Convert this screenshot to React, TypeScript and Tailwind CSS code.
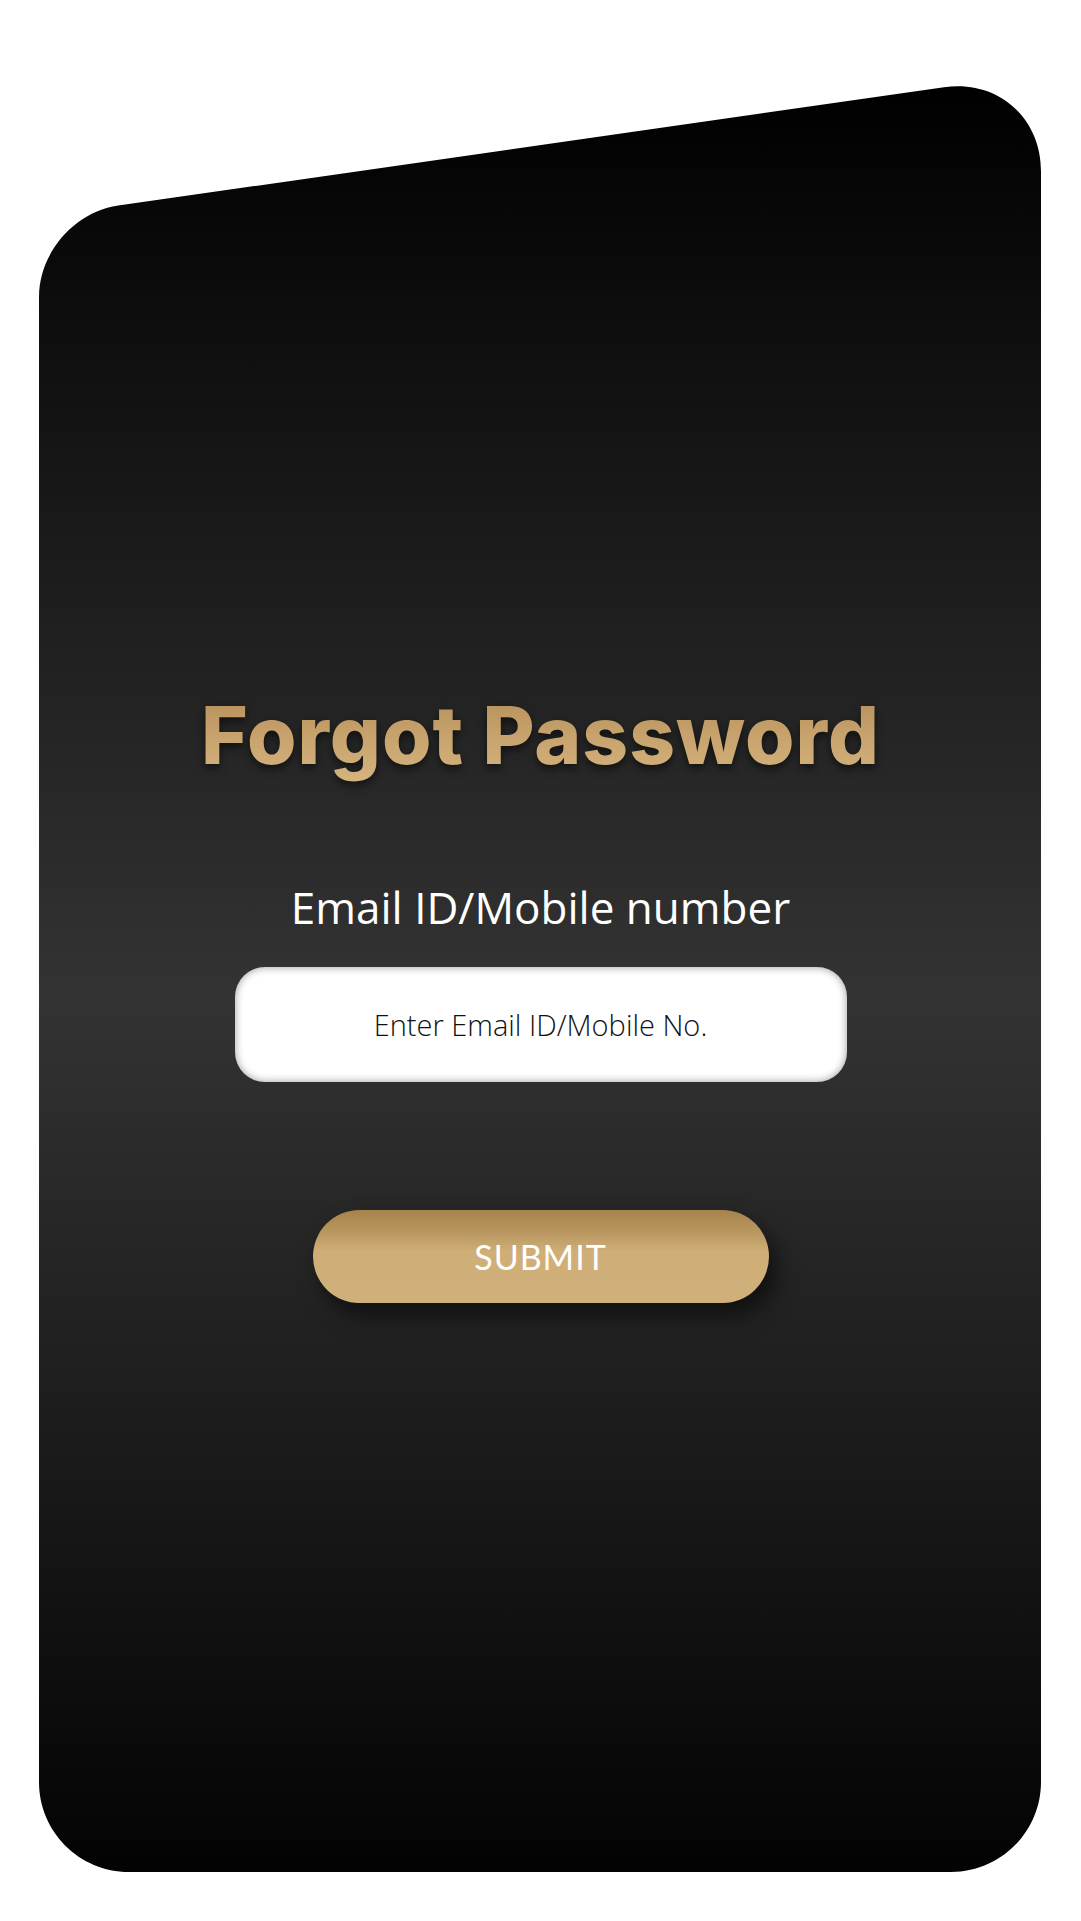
import React, { useState } from 'react';

// card outline: slanted top edge, rounded corners (card box is 1002 x 1788)
const cardShape =
  "[clip-path:path('M0,213C0,168.8,35.5,127.9,79.2,121.6L905,3.2C958.6,-4.5,1002,33.2,1002,87.3L1002,1698C1002,1747.7,961.7,1788,912,1788L90,1788C40.3,1788,0,1747.7,0,1698Z')]";

export default function App() {
  const [value, setValue] = useState('');

  const handleSubmit = (e: React.FormEvent) => {
    e.preventDefault();
  };

  return (
    <div className="min-h-[1921px] w-full bg-white pt-[84px] font-['Open_Sans','Lato',sans-serif]">
      <div
        className={`mx-[39px] h-[1788px] bg-[linear-gradient(180deg,#000_0%,#1a1a1a_25%,#333_51%,#1c1c1c_75%,#030303_100%)] ${cardShape}`}
      >
        <form onSubmit={handleSubmit} className="flex flex-col items-center pt-[601px]">
          <h1 className="bg-[linear-gradient(180deg,#b38c57_0%,#c9a46e_55%,#d6b57f_100%)] bg-clip-text text-[80px] font-extrabold leading-[1.25] tracking-[1px] text-transparent drop-shadow-[0_4px_4px_rgba(0,0,0,0.55)] font-['Inter',sans-serif]">
            Forgot Password
          </h1>

          <label htmlFor="account" className="mt-[100px] text-[44px] leading-none text-white">
            Email ID/Mobile number
          </label>

          <input
            id="account"
            type="text"
            value={value}
            onChange={(e) => setValue(e.target.value)}
            placeholder="Enter Email ID/Mobile No."
            className="mt-[38px] h-[115px] w-[612px] rounded-[30px] bg-white text-center text-[29px] font-light text-[#111] shadow-[inset_0_0_9px_rgba(0,0,0,0.4)] outline-none placeholder:text-[#111]"
          />

          <button
            type="submit"
            className="mt-[128px] h-[93px] w-[456px] rounded-full bg-[linear-gradient(180deg,#a8824b_0%,#bb9861_25%,#cfae78_45%,#d0b07a_100%)] font-['Lato',sans-serif] text-[34px] tracking-[1px] text-white shadow-[8px_12px_22px_rgba(0,0,0,0.55)]"
          >
            SUBMIT
          </button>
        </form>
      </div>
    </div>
  );
}
